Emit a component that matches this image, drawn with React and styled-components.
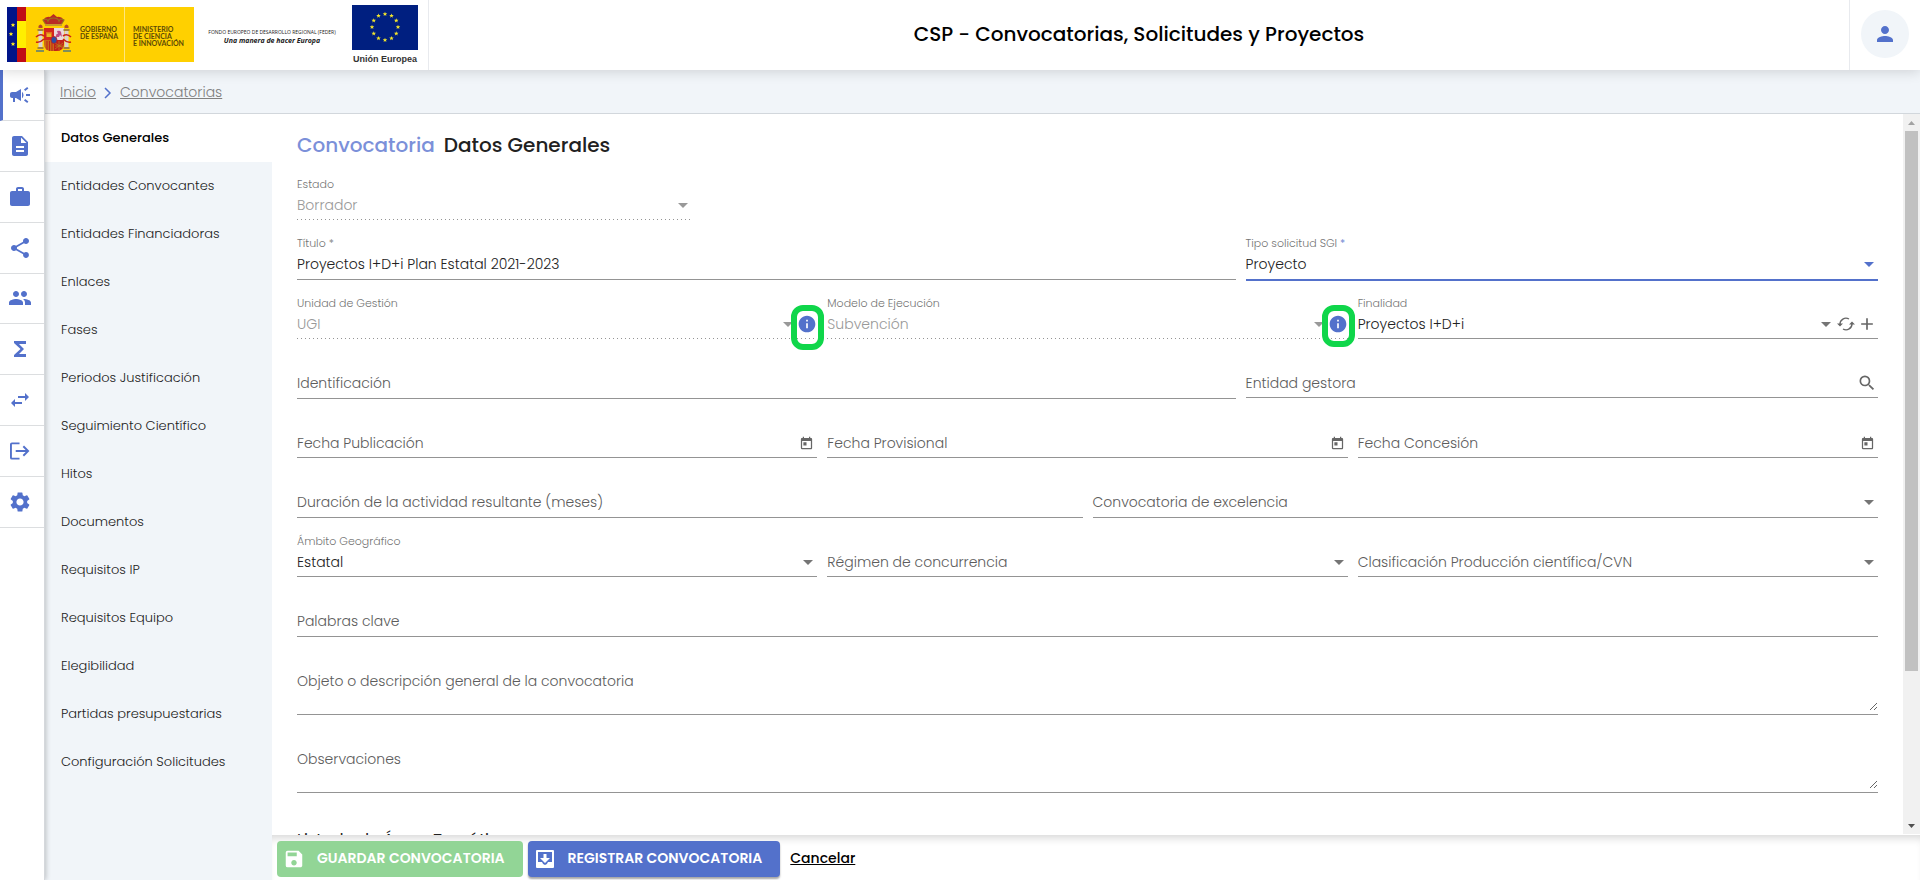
import React from 'react';
import styled, { createGlobalStyle } from 'styled-components';
import {
  MdCampaign, MdDescription, MdWork, MdShare, MdPeople, MdFunctions, MdSettings,
  MdPerson, MdInfo, MdSearch, MdAdd, MdSave, MdSwapHoriz, MdToday,
} from 'react-icons/md';

const blue = '#5371cb';
const pale = '#f1f5f9';
const line = '#949494';

const GlobalStyle = createGlobalStyle`
  *, *::before, *::after { box-sizing: border-box; }
  body {
    margin: 0;
    background: #fff;
    color: #212121;
    font-family: Poppins, Inter, "Liberation Sans", sans-serif;
    font-size: 14px;
    font-weight: 300;
  }
  button, input, select, textarea { font: inherit; color: inherit; }
  button { border: 0; padding: 0; background: none; cursor: pointer; }
  a { color: inherit; }
`;

const Page = styled.div`
  display: flex;
  flex-direction: column;
  height: 100vh;
`;

/* ---------- Header ---------- */

const Header = styled.header`
  position: relative;
  z-index: 2;
  display: flex;
  flex: none;
  height: 70px;
  background: #fff;
  box-shadow: 0 2px 12px rgba(0, 0, 0, 0.14);
`;

const Logos = styled.div`
  display: flex;
  align-items: flex-start;
  width: 429px;
  padding: 5px 0 0 7px;
  border-right: 1px solid #e8eaee;
`;

const Government = styled.div`
  display: flex;
  height: 55px;
  margin-top: 2px;
  background: #ffd000;
  color: #5c4a06;
  font: 700 7px/7px Lato, "Liberation Sans", sans-serif;
`;

const Arms = styled.div`
  width: 54px;
  padding: 7px 0 0 9px;
`;

const GovText = styled.p`
  width: ${(p) => p.$width}px;
  margin: 0;
  padding: 19px 0 0 ${(p) => p.$indent}px;
  border-right: ${(p) => (p.$divided ? '1px solid #ffe680' : '0')};
  white-space: nowrap;
`;

const Feder = styled.p`
  width: 136px;
  margin: 23px 12px 0 10px;
  color: #222;
  text-align: center;
  white-space: nowrap;
  font: 500 5px/9px "Open Sans", sans-serif;
`;

const FederSlogan = styled.em`
  display: block;
  font: italic 700 7px/8px "Open Sans", sans-serif;
`;

const Union = styled.div`
  display: flex;
  flex-direction: column;
  align-items: center;
  color: #333;
  font: 700 9px/18px "Liberation Sans", sans-serif;
`;

const AppTitle = styled.h1`
  flex: 1;
  margin: 0;
  color: #000;
  text-align: center;
  font-size: 20px;
  font-weight: 500;
  line-height: 68px;
`;

const UserCell = styled.div`
  display: grid;
  place-items: center;
  width: 71px;
  padding-bottom: 2px;
  border-left: 1px solid #e8eaee;
`;

const UserButton = styled.button`
  display: grid;
  place-items: center;
  width: 48px;
  height: 48px;
  border-radius: 50%;
  background: ${pale};
  color: ${blue};
`;

/* ---------- Rail and section menu ---------- */

const Body = styled.div`
  display: flex;
  flex: 1;
  min-height: 0;
`;

const Rail = styled.nav`
  position: relative;
  z-index: 1;
  flex: none;
  width: 45px;
  background: #fff;
  border-right: 1px solid #d5d8dc;
  box-shadow: 1px 0 5px rgba(0, 0, 0, 0.22);
`;

const RailList = styled.div`
  display: grid;
  grid-auto-rows: 1fr;
  height: 458px;
`;

const RailLink = styled.a`
  display: grid;
  place-items: center;
  padding-right: ${(p) => (p.$active ? 7 : 4)}px;
  border-bottom: 1px solid #dcdee0;
  border-left: ${(p) => (p.$active ? `3px solid ${blue}` : '0')};
  color: ${blue};
`;

const Workspace = styled.div`
  display: flex;
  flex: 1;
  flex-direction: column;
  min-width: 0;
`;

const Breadcrumb = styled.nav`
  display: flex;
  flex: none;
  align-items: center;
  gap: 8px;
  height: 44px;
  padding: 2px 0 0 15px;
  background: ${pale};
  border-bottom: 1px solid #d2d7dc;
  color: #808080;
`;

const Columns = styled.div`
  display: flex;
  flex: 1;
  min-height: 0;
`;

const Menu = styled.nav`
  flex: none;
  width: 227px;
  background: ${pale};
`;

const MenuLink = styled.a`
  display: block;
  padding-left: 16px;
  background: ${(p) => (p.$active ? '#fff' : 'transparent')};
  color: ${(p) => (p.$active ? '#000' : '#222')};
  font-size: 13px;
  font-weight: ${(p) => (p.$active ? 500 : 300)};
  line-height: 48px;
  text-decoration: none;
`;

/* ---------- Form ---------- */

const Content = styled.main`
  display: flex;
  flex: 1;
  flex-direction: column;
  min-width: 0;
`;

const ScrollArea = styled.div`
  display: flex;
  flex: 1;
  min-height: 0;
`;

const Form = styled.form`
  flex: 1;
  padding: 16px 25px 0;
  overflow: auto;
  scrollbar-width: none;
`;

const Heading = styled.h2`
  display: flex;
  gap: 9px;
  margin: 0 0 1px;
  font-size: 20px;
  font-weight: 500;
  line-height: 30px;
  color: #212121;
`;

const HeadingKind = styled.span`
  color: #7b90d9;
`;

const Row = styled.div`
  display: grid;
  grid-template-columns: ${(p) => p.$columns};
  align-items: start;
  column-gap: 10px;
`;

const FieldBox = styled.div`
  display: grid;
  grid-template-columns: 1fr auto;
  grid-template-rows: 18px 1fr;
  height: ${(p) => p.$height}px;
  margin-bottom: ${(p) => (p.$active ? -1 : 0)}px;
  padding-top: 15px;
  border-bottom: ${(p) => (p.$active ? `2px solid ${blue}` : p.$disabled ? '0' : `1px solid ${line}`)};
  background: ${(p) => (p.$disabled
    ? `repeating-linear-gradient(to right, ${line} 0 1px, transparent 1px 4px) left bottom / 100% 1px no-repeat`
    : 'none')};
`;

const Label = styled.label`
  grid-column: 1;
  grid-row: ${(p) => (p.$empty ? 2 : 1)};
  align-self: start;
  color: ${(p) => (p.$empty ? '#5c5c5c' : '#757575')};
  font-size: ${(p) => (p.$empty ? 14 : 11)}px;
  line-height: ${(p) => (p.$empty ? 22 : 16)}px;
  white-space: nowrap;
  pointer-events: none;
`;

const Required = styled.span`
  color: ${(p) => (p.$active ? blue : 'inherit')};
`;

const control = `
  grid-column: 1;
  grid-row: 2;
  align-self: start;
  width: 100%;
  min-width: 0;
  height: 22px;
  margin: 0;
  padding: 0;
  border: 0;
  border-radius: 0;
  outline: 0;
  background: transparent;
  line-height: 22px;
  appearance: none;
`;

const Input = styled.input`
  ${control}
`;

const Select = styled.select`
  ${control}
  opacity: 1;
  &:disabled { color: #999; opacity: 1; }
`;

const TextArea = styled.textarea`
  ${control}
  grid-column: 1 / -1;
  height: 41px;
  resize: vertical;
`;

const Suffix = styled.div`
  grid-column: 2;
  grid-row: 2;
  display: flex;
  align-items: center;
  gap: ${(p) => p.$gap || 0}px;
  height: 22px;
  padding-right: ${(p) => p.$inset || 0}px;
  color: #757575;
`;

const Arrow = styled.span`
  width: 0;
  margin: 0 4px;
  border: 5px solid transparent;
  border-top-color: ${(p) => p.$color || '#757575'};
  border-bottom: 0;
`;

const IconButton = styled.button`
  position: relative;
  display: grid;
  place-items: center;
  color: ${(p) => p.$color || '#666'};
`;

const Highlight = styled.span`
  position: absolute;
  top: -9px;
  left: -6px;
  width: 33px;
  height: ${(p) => p.$height}px;
  border: 6px solid #0fd64a;
  border-radius: 12px;
`;

const Subheading = styled.h3`
  margin: 35px 0 24px;
  font-size: 16px;
  font-weight: 400;
  line-height: 24px;
`;

const Scrollbar = styled.div`
  display: flex;
  flex-direction: column;
  align-items: center;
  flex: none;
  width: 17px;
  margin-bottom: 1px;
  background: #f1f1f1;
`;

const ScrollEnd = styled.span`
  display: grid;
  place-items: center;
  flex: none;
  height: 17px;
  color: ${(p) => p.$color};
`;

const Thumb = styled.span`
  width: 13px;
  height: 75%;
  margin-bottom: auto;
  background: #c1c1c1;
`;

/* ---------- Footer ---------- */

const Footer = styled.footer`
  display: flex;
  flex: none;
  align-items: center;
  height: 45px;
  padding: 2px 5px 0;
  box-shadow: inset 0 8px 9px -5px rgba(0, 0, 0, 0.16);
`;

const Action = styled.button`
  display: flex;
  align-items: center;
  gap: 12px;
  height: 36px;
  margin-right: 5px;
  padding: 0 18px 0 6px;
  border-radius: 4px;
  background: ${(p) => p.$color};
  box-shadow: ${(p) => (p.disabled ? 'none' : '0 2px 2px rgba(0, 0, 0, 0.35)')};
  color: #fff;
  font-size: 14px;
  font-weight: 600;
  white-space: nowrap;
`;

const Cancel = styled.a`
  margin-left: 5px;
  color: #000;
  font-weight: 500;
`;

/* ---------- Drawings ---------- */

function FlagBand() {
  return (
    <svg width="19" height="55" viewBox="0 0 19 55" aria-hidden="true">
      <path d="M0 0h10v55H0z" fill="#001489" />
      <path d="M10 0h9v14h-9zM10 41h9v14h-9z" fill="#c00d16" />
      <path d="M10 14h9v27h-9z" fill="#ffef00" />
      {[[6, 18], [4, 27], [6, 37]].map(([x, y]) => (
        <path key={y} transform={`translate(${x} ${y})`} fill="#ffee20" d="M0-2.300.6-.7 2.200-.7 1 .4 1.400 2 0 1-1.400 2-1 .4-2.200-.7-.6-.7z" />
      ))}
    </svg>
  );
}

function CoatOfArms() {
  return (
    <svg width="37" height="39" viewBox="0 0 37 39" aria-hidden="true">
      <path d="M8 6q3-4 7-3l3.500-3 3.500 3q4-1 7 3l-3 5H11z" fill="#b92c24" />
      <path d="M8 6q4-2 5 1 1-3 5.500-3T24 7q1-3 5-1l-3 5H11z" fill="none" stroke="#9a7220" strokeWidth="1.200" />
      <path d="M10 10h17v2H10z" fill="#c79a2c" />
      <path d="M9 14h10v12H9z" fill="#d5251c" />
      <path d="M19 14h10v12H19z" fill="#ead8dc" />
      <path d="M9 26h10v11q-10 1-10-7z" fill="#c96a16" />
      <path d="M19 26h10v4q0 8-10 7z" fill="#c2201c" />
      <path d="M12 27v9M14.500 27v10M17 27v10" stroke="#c22419" strokeWidth="1" />
      <path d="M20 29l8 5M20 35l8-6M24 27v9M20 32h8" stroke="#b98a1c" strokeWidth=".7" />
      <path d="M11.500 23v-5h1v1.500h1V18h1v1.500h1V18h1v5z" fill="#e9b421" />
      <path d="M21 23q0-4 2-3l-1-3q3-1 4 1l1 5-2-2-1 2z" fill="#c04a80" />
      <ellipse cx="19" cy="26" rx="3" ry="3.500" fill="#2d4fa3" stroke="#c2201c" strokeWidth=".8" />
      <path d="M3.500 17h4v17h-4zM29.500 17h4v17h-4z" fill="#dcd3cf" />
      <path d="M2.500 15h6v2h-6zM28.500 15h6v2h-6zM2.500 33h6v2h-6zM28.500 33h6v2h-6z" fill="#a6803a" />
      <path d="M3.500 12q2-3 4 0v2h-4zM29.500 12q2-3 4 0v2h-4z" fill="#b5462c" />
      <path d="M1 23q4-4 8-1M1 28q4 1 8-3M36 23q-4-4-8-1M36 28q-4 1-8-3" fill="none" stroke="#cb2218" strokeWidth="1.600" />
      <path d="M1 36h8v2H1zM28 36h8v2h-8z" fill="#7e8f5d" />
    </svg>
  );
}

function EuropeFlag() {
  return (
    <svg width="66" height="45" viewBox="0 0 66 45" aria-hidden="true">
      <path d="M0 0h66v45H0z" fill="#001f80" />
      {Array.from({ length: 12 }, (_, i) => {
        const angle = (i * Math.PI) / 6;
        return (
          <path
            key={i}
            transform={`translate(${33 + 13 * Math.sin(angle)} ${22 - 13 * Math.cos(angle)})`}
            fill="#f2e52b"
            d="M0-2.200.6-.7 2.200-.7 1 .4 1.400 2 0 1-1.400 2-1 .4-2.200-.7-.6-.7z"
          />
        );
      })}
    </svg>
  );
}

function ExitIcon() {
  return (
    <svg width="20" height="18" viewBox="1 1 21 18" fill="none" stroke="currentColor" strokeWidth="2" aria-hidden="true">
      <path d="M11 2H3a1 1 0 0 0-1 1v14a1 1 0 0 0 1 1h8M7 10h13M15 5l5 5-5 5" />
    </svg>
  );
}

function ChevronIcon() {
  return (
    <svg width="8" height="12" viewBox="0 0 8 12" fill="none" stroke={blue} strokeWidth="1.500" aria-hidden="true">
      <path d="M1 1l5 5-5 5" />
    </svg>
  );
}

function RefreshIcon() {
  return (
    <svg width="18" height="16" viewBox="0 0 18 16" aria-hidden="true">
      <path d="M3 8.500A6 6 0 0 1 12 3M15 7.500A6 6 0 0 1 6 13" fill="none" stroke="currentColor" strokeWidth="1.400" />
      <path d="M0 7.500h6L3 10.500zM12 8.500h6l-3-3z" fill="currentColor" />
    </svg>
  );
}

function InboxIcon() {
  return (
    <svg width="22" height="20" viewBox="0 0 20 20" aria-hidden="true">
      <path fill="currentColor" fillRule="evenodd" d="M2 1h16a1 1 0 0 1 1 1v16a1 1 0 0 1-1 1H2a1 1 0 0 1-1-1V2a1 1 0 0 1 1-1zM3 3v10h4q1 3 3 3t3-3h4V3zM8.500 5h3v4H15l-5 5-5-5h3.500z" />
    </svg>
  );
}

function Triangle({ up }) {
  return (
    <svg width="7" height="4" viewBox="0 0 7 4" aria-hidden="true">
      <path d={up ? 'M0 4h7L3.500 0z' : 'M0 0h7L3.500 4z'} fill="currentColor" />
    </svg>
  );
}

/* ---------- Composition ---------- */

function Field({ id, label, value = '', kind = 'select', height = 59, required, disabled, active, children }) {
  const empty = !value;
  let element = <Input id={id} defaultValue={value} />;
  if (kind === 'select') {
    element = (
      <Select id={id} defaultValue={value} disabled={disabled}>
        <option value={value}>{value}</option>
      </Select>
    );
  }
  if (kind === 'area') element = <TextArea id={id} defaultValue={value} />;
  return (
    <FieldBox $height={height} $disabled={disabled} $active={active}>
      <Label htmlFor={id} $empty={empty}>
        {label}
        {required && <Required $active={active}> *</Required>}
      </Label>
      {element}
      {children}
    </FieldBox>
  );
}

function SelectArrow({ color }) {
  return <Suffix><Arrow $color={color} /></Suffix>;
}

function InfoSuffix({ label, height }) {
  return (
    <Suffix>
      <Arrow $color="#999" />
      <IconButton type="button" aria-label={label} $color={blue}>
        <MdInfo size={20} />
        <Highlight $height={height} />
      </IconButton>
    </Suffix>
  );
}

function DateField({ id, label }) {
  return (
    <Field id={id} label={label} kind="input">
      <Suffix $inset={3}>
        <IconButton type="button" aria-label={`Abrir calendario: ${label}`}><MdToday size={15} /></IconButton>
      </Suffix>
    </Field>
  );
}

const modules = [
  ['Convocatorias', <MdCampaign size={24} />],
  ['Solicitudes', <MdDescription size={24} />],
  ['Proyectos', <MdWork size={24} />],
  ['Grupos', <MdShare size={24} />],
  ['Personas', <MdPeople size={24} />],
  ['Ejecución económica', <MdFunctions size={24} />],
  ['Intercambios', <MdSwapHoriz size={24} />],
  ['Salidas', <ExitIcon />],
  ['Configuración', <MdSettings size={24} />],
];

const sections = [
  'Datos Generales', 'Entidades Convocantes', 'Entidades Financiadoras', 'Enlaces', 'Fases',
  'Periodos Justificación', 'Seguimiento Científico', 'Hitos', 'Documentos', 'Requisitos IP',
  'Requisitos Equipo', 'Elegibilidad', 'Partidas presupuestarias', 'Configuración Solicitudes',
];

export default function App() {
  return (
    <Page>
      <GlobalStyle />
      <Header>
        <Logos>
          <Government>
            <FlagBand />
            <Arms><CoatOfArms /></Arms>
            <GovText $width={45} $indent={0} $divided>GOBIERNO<br />DE ESPAÑA</GovText>
            <GovText $width={69} $indent={8}>MINISTERIO<br />DE CIENCIA<br />E INNOVACIÓN</GovText>
          </Government>
          <Feder>
            FONDO EUROPEO DE DESARROLLO REGIONAL (FEDER)
            <FederSlogan>Una manera de hacer Europa</FederSlogan>
          </Feder>
          <Union>
            <EuropeFlag />
            Unión Europea
          </Union>
        </Logos>
        <AppTitle>CSP - Convocatorias, Solicitudes y Proyectos</AppTitle>
        <UserCell>
          <UserButton type="button" aria-label="Usuario"><MdPerson size={24} /></UserButton>
        </UserCell>
      </Header>

      <Body>
        <Rail>
          <RailList>
            {modules.map(([name, icon], i) => (
              <RailLink key={name} href="#" aria-label={name} $active={i === 0}>{icon}</RailLink>
            ))}
          </RailList>
        </Rail>

        <Workspace>
          <Breadcrumb>
            <a href="#">Inicio</a>
            <ChevronIcon />
            <a href="#">Convocatorias</a>
          </Breadcrumb>

          <Columns>
            <Menu>
              {sections.map((name, i) => (
                <MenuLink key={name} href="#" $active={i === 0}>{name}</MenuLink>
              ))}
            </Menu>

            <Content>
              <ScrollArea>
                <Form>
                  <Heading><HeadingKind>Convocatoria</HeadingKind>Datos Generales</Heading>

                  <Row $columns="25%">
                    <Field id="estado" label="Estado" value="Borrador" disabled>
                      <SelectArrow color="#999" />
                    </Field>
                  </Row>

                  <Row $columns="1fr 40%">
                    <Field id="titulo" label="Título" value="Proyectos I+D+i Plan Estatal 2021-2023" kind="input" height={60} required />
                    <Field id="tipo" label="Tipo solicitud SGI" value="Proyecto" height={61} required active>
                      <SelectArrow color={blue} />
                    </Field>
                  </Row>

                  <Row $columns="repeat(3, 1fr)">
                    <Field id="unidad" label="Unidad de Gestión" value="UGI" disabled>
                      <InfoSuffix label="Información de la unidad de gestión" height={45} />
                    </Field>
                    <Field id="modelo" label="Modelo de Ejecución" value="Subvención" disabled>
                      <InfoSuffix label="Información del modelo de ejecución" height={42} />
                    </Field>
                    <Field id="finalidad" label="Finalidad" value="Proyectos I+D+i">
                      <Suffix $inset={1} $gap={2}>
                        <Arrow />
                        <IconButton type="button" aria-label="Recargar"><RefreshIcon /></IconButton>
                        <IconButton type="button" aria-label="Añadir"><MdAdd size={20} /></IconButton>
                      </Suffix>
                    </Field>
                  </Row>

                  <Row $columns="1fr 40%">
                    <Field id="identificacion" label="Identificación" kind="input" height={60} />
                    <Field id="entidad" label="Entidad gestora" kind="input">
                      <Suffix $inset={1}>
                        <IconButton type="button" aria-label="Buscar entidad"><MdSearch size={20} /></IconButton>
                      </Suffix>
                    </Field>
                  </Row>

                  <Row $columns="repeat(3, 1fr)">
                    <DateField id="publicacion" label="Fecha Publicación" />
                    <DateField id="provisional" label="Fecha Provisional" />
                    <DateField id="concesion" label="Fecha Concesión" />
                  </Row>

                  <Row $columns="1fr 1fr">
                    <Field id="duracion" label="Duración de la actividad resultante (meses)" kind="input" height={60} />
                    <Field id="excelencia" label="Convocatoria de excelencia" height={60}>
                      <SelectArrow />
                    </Field>
                  </Row>

                  <Row $columns="repeat(3, 1fr)">
                    <Field id="ambito" label="Ámbito Geográfico" value="Estatal"><SelectArrow /></Field>
                    <Field id="regimen" label="Régimen de concurrencia"><SelectArrow /></Field>
                    <Field id="clasificacion" label="Clasificación Producción científica/CVN"><SelectArrow /></Field>
                  </Row>

                  <Row $columns="1fr">
                    <Field id="palabras" label="Palabras clave" kind="input" height={60} />
                  </Row>
                  <Row $columns="1fr">
                    <Field id="objeto" label="Objeto o descripción general de la convocatoria" kind="area" height={78} />
                  </Row>
                  <Row $columns="1fr">
                    <Field id="observaciones" label="Observaciones" kind="area" height={78} />
                  </Row>

                  <Subheading>Listado de Áreas Temáticas</Subheading>
                </Form>
                <Scrollbar aria-hidden="true">
                  <ScrollEnd $color="#a3a3a3"><Triangle up /></ScrollEnd>
                  <Thumb />
                  <ScrollEnd $color="#505050"><Triangle /></ScrollEnd>
                </Scrollbar>
              </ScrollArea>

              <Footer>
                <Action type="button" disabled $color="#92d596"><MdSave size={22} />GUARDAR CONVOCATORIA</Action>
                <Action type="button" $color={blue}><InboxIcon />REGISTRAR CONVOCATORIA</Action>
                <Cancel href="#">Cancelar</Cancel>
              </Footer>
            </Content>
          </Columns>
        </Workspace>
      </Body>
    </Page>
  );
}
